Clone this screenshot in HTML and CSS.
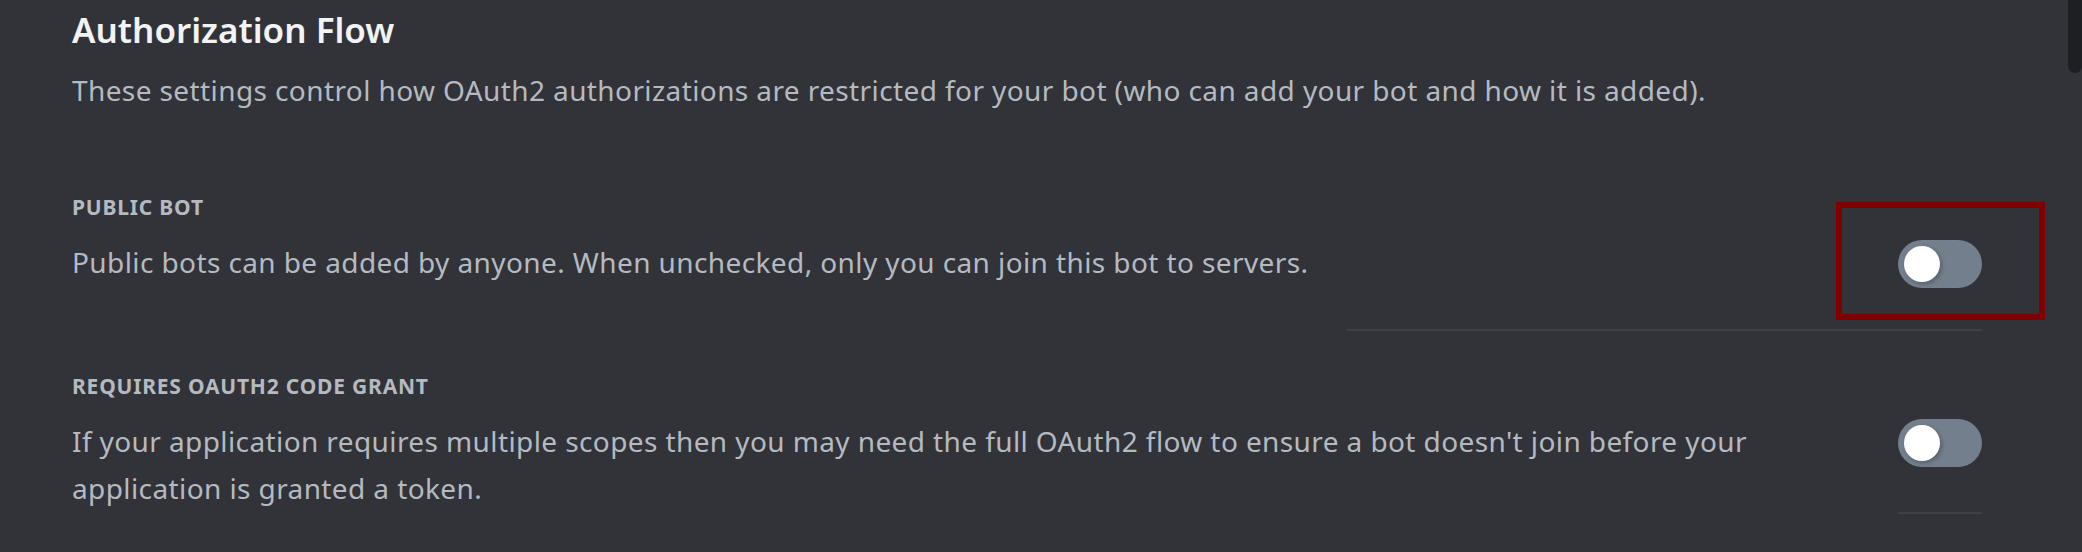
FILE: index.html
```html
<!DOCTYPE html>
<html lang="en">
<head>
<meta charset="utf-8">
<title>Authorization Flow</title>
<link rel="stylesheet" href="styles.css">
</head>
<body>
<main class="page">
  <h2 class="title">Authorization Flow</h2>
  <p class="intro">These settings control how OAuth2 authorizations are restricted for your bot (who can add your bot and how it is added).</p>

  <section class="setting setting-public">
    <h3 class="setting-label">PUBLIC BOT</h3>
    <div class="setting-row">
      <p class="setting-desc">Public bots can be added by anyone. When unchecked, only you can join this bot to servers.</p>
      <div class="toggle-wrap">
        <div class="toggle" role="switch" aria-checked="false"><span class="knob"></span></div>
        <div class="highlight"></div>
      </div>
    </div>
    <div class="divider divider-wide"></div>
  </section>

  <section class="setting setting-grant">
    <h3 class="setting-label">REQUIRES OAUTH2 CODE GRANT</h3>
    <div class="setting-row">
      <p class="setting-desc">If your application requires multiple scopes then you may need the full OAuth2 flow to ensure a bot doesn't join before your application is granted a token.</p>
      <div class="toggle-wrap">
        <div class="toggle" role="switch" aria-checked="false"><span class="knob"></span></div>
      </div>
    </div>
    <div class="divider divider-narrow"></div>
  </section>
</main>
<div class="scroll-thumb"></div>
</body>
</html>
```

FILE: styles.css
```css
html, body {
  margin: 0;
  padding: 0;
  background: #313338;
  height: 552px;
  overflow: hidden;
}

body {
  font-family: "Noto Sans", "Open Sans", sans-serif;
  color: #b5bac1;
  position: relative;
}

.page {
  padding: 0 100px 0 72px;
  display: flex;
  flex-direction: column;
}

.title {
  margin: 10px 0 0;
  font-size: 35px;
  line-height: 40px;
  font-weight: 600;
  color: #f2f3f5;
}

.intro {
  margin: 20px 0 0;
  font-size: 28px;
  line-height: 40px;
  letter-spacing: 0.4px;
  color: #b5bac1;
}

.setting {
  display: flex;
  flex-direction: column;
}

.setting-public {
  margin-top: 85px;
}

.setting-grant {
  margin-top: 43px;
}

.setting-label {
  margin: 0;
  font-size: 21px;
  line-height: 24px;
  font-weight: 700;
  letter-spacing: 0.8px;
  color: #b5bac1;
}

.setting-row {
  margin-top: 20px;
  display: flex;
  align-items: flex-start;
  gap: 60px;
}

.setting-desc {
  flex: 1;
  margin: 0;
  font-size: 28px;
  line-height: 47px;
  letter-spacing: 0.4px;
  color: #b5bac1;
}

.toggle-wrap {
  position: relative;
  padding-top: 1px;
}

.toggle {
  width: 84px;
  height: 48px;
  border-radius: 24px;
  background: #747f8d;
  display: flex;
  align-items: center;
  padding: 0 6px;
  box-sizing: border-box;
}

.knob {
  width: 36px;
  height: 36px;
  border-radius: 50%;
  background: #ffffff;
  box-shadow: 2px 2px 4px rgba(0, 0, 0, 0.25);
}

.highlight {
  position: absolute;
  left: -62px;
  top: -37px;
  width: 209px;
  height: 118px;
  box-sizing: border-box;
  border: 6px solid #800000;
}

.divider {
  height: 2px;
  background: #3f4147;
  align-self: flex-end;
}

.divider-wide {
  width: 635px;
  margin-top: 41px;
}

.divider-narrow {
  width: 84px;
  margin-top: 0;
}

.scroll-thumb {
  position: absolute;
  top: 0;
  right: 0;
  width: 14px;
  height: 73px;
  background: #1e1f22;
  border-radius: 0 0 7px 7px;
}
```
